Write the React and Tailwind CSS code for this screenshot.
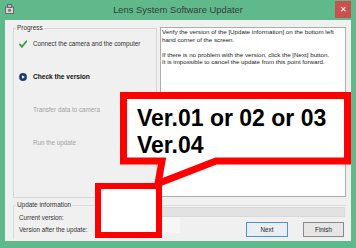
import React from "react";

function Check() {
  return (
    <svg width="8" height="8" viewBox="0 0 8 8">
      <path d="M0.8 4.4 L3 6.8 L7.4 1.2" fill="none" stroke="#3f9f3f" strokeWidth="1.8" strokeLinejoin="round" strokeLinecap="round" />
    </svg>
  );
}

function Play() {
  return (
    <svg width="8" height="8" viewBox="0 0 8 8">
      <circle cx="4" cy="4" r="3.9" fill="#1b3a78" />
      <path d="M3 2.2 L5.9 4 L3 5.8 Z" fill="#ffffff" />
    </svg>
  );
}

function AppIcon() {
  return (
    <svg width="9" height="10" viewBox="0 0 9 10">
      <rect x="0.5" y="3" width="8" height="6.5" fill="#d8d8d8" stroke="#6a6a6a" strokeWidth="1" />
      <rect x="2.5" y="0.5" width="4" height="3" fill="#bdbdbd" stroke="#6a6a6a" strokeWidth="1" />
      <circle cx="4.5" cy="6.3" r="1.6" fill="#7a7a7a" />
    </svg>
  );
}

export default function App() {
  const ui = "font-['Liberation_Sans',Arial,sans-serif]";
  return (
    <div className={`relative w-[356px] h-[248px] bg-[#5fb98b] flex flex-col overflow-hidden ${ui}`}>
      {/* Title bar */}
      <div className="h-[20px] flex items-start shrink-0">
        <div className="w-[21px] pl-[5px] pt-[4px]">
          <AppIcon />
        </div>
        <div className="flex-1 text-center text-[9.4px] leading-[20px] text-[#3a3a3a]">
          Lens System Software Updater
        </div>
        <div className="w-[21px] pt-[1px]">
          <div className="w-[16px] h-[17px] bg-[#c8504e] flex items-center justify-center text-white text-[8px] leading-none">
            ✕
          </div>
        </div>
      </div>

      {/* Content */}
      <div className="mx-[5px] h-[221px] bg-[#f0f0f0] flex flex-col shrink-0">
        <div className="flex items-start pt-[7px] pl-[8px] h-[178px]">
          {/* Progress group */}
          <div className="relative mt-[1px] w-[144px] h-[170px] border border-[#d7d7d7]">
            <span className="absolute -top-[5px] left-[2px] bg-[#f0f0f0] px-[1px] text-[6.4px] leading-[8px] text-[#333]">
              Progress
            </span>
            <div className="flex flex-col gap-[17px] pt-[7px] pl-[5px] text-[6.3px]">
              <div className="h-[16px] flex items-center gap-[6px] text-[#333]">
                <Check />
                <span>Connect the camera and the computer</span>
              </div>
              <div className="h-[16px] flex items-center gap-[6px] text-[#111] font-bold text-[6.6px]">
                <Play />
                <span>Check the version</span>
              </div>
              <div className="h-[16px] flex items-center gap-[6px] text-[#a3a3a3]">
                <span className="w-[8px]" />
                <span>Transfer data to camera</span>
              </div>
              <div className="h-[16px] flex items-center gap-[6px] text-[#a3a3a3]">
                <span className="w-[8px]" />
                <span>Run the update</span>
              </div>
            </div>
          </div>
          {/* Message box */}
          <div className="ml-[3px] w-[186px] h-[170px] bg-white border border-[#adadad] px-[1px] text-[6.2px] leading-[7.5px] text-[#222]">
            <p>Verify the version of the [Update information] on the bottom left hand corner of the screen.</p>
            <p className="mt-[7.5px]">
              If there is no problem with the version, click the [Next] button.
              <br />
              It is impossible to cancel the update from this point forward.
            </p>
          </div>
        </div>

        {/* Update information group */}
        <div className="relative mt-[7px] ml-[8px] w-[333px] h-[34px] border-t border-l border-[#dcdcdc] flex">
          <span className="absolute -top-[5px] left-[2px] bg-[#f0f0f0] px-[1px] text-[6.4px] leading-[8px] text-[#333]">
            Update information
          </span>
          <div className="w-[86px] pt-[6px] pl-[5px] text-[6.3px] leading-[12px] text-[#333]">
            <div>Current version:</div>
            <div>Version after the update:</div>
          </div>
          <div className="flex flex-col w-[245px]">
            <div className="mt-[1px] h-[10px] bg-[#e2e2e2] border border-[#d9d9d9]" />
            <div className="flex items-start">
              <div className="w-[80px] h-[16px] bg-[#f6f6f6]" />
              <div className="ml-auto mr-[1px] mt-[5px] flex gap-[15px] text-[6.3px] text-[#222]">
                <div className="w-[42px] h-[15px] border border-[#4f92cc] bg-[#e9eef3] flex items-center justify-center">
                  Next
                </div>
                <div className="w-[41px] h-[15px] border border-[#8a8a8a] bg-[#e6e6e6] flex items-center justify-center">
                  Finish
                </div>
              </div>
            </div>
          </div>
        </div>
      </div>

      {/* Annotation callout overlay */}
      <svg className="absolute left-0 top-0 pointer-events-none" width="356" height="248" viewBox="0 0 356 248">
        <path
          d="M123.5 95.5 H347.5 V161 H216 L158 183.5 L162 161 H123.5 Z"
          fill="#ffffff"
          stroke="#ff0000"
          strokeWidth="7"
          strokeLinejoin="miter"
        />
        <rect x="98" y="186" width="61" height="49" fill="#ffffff" stroke="#ff0000" strokeWidth="6" />
      </svg>
      <div className="absolute left-[137px] top-[105px] text-[23px] leading-[27px] font-bold text-black font-['Liberation_Sans',Arial,sans-serif]">
        <div>Ver.01 or 02 or 03</div>
        <div>Ver.04</div>
      </div>
    </div>
  );
}
